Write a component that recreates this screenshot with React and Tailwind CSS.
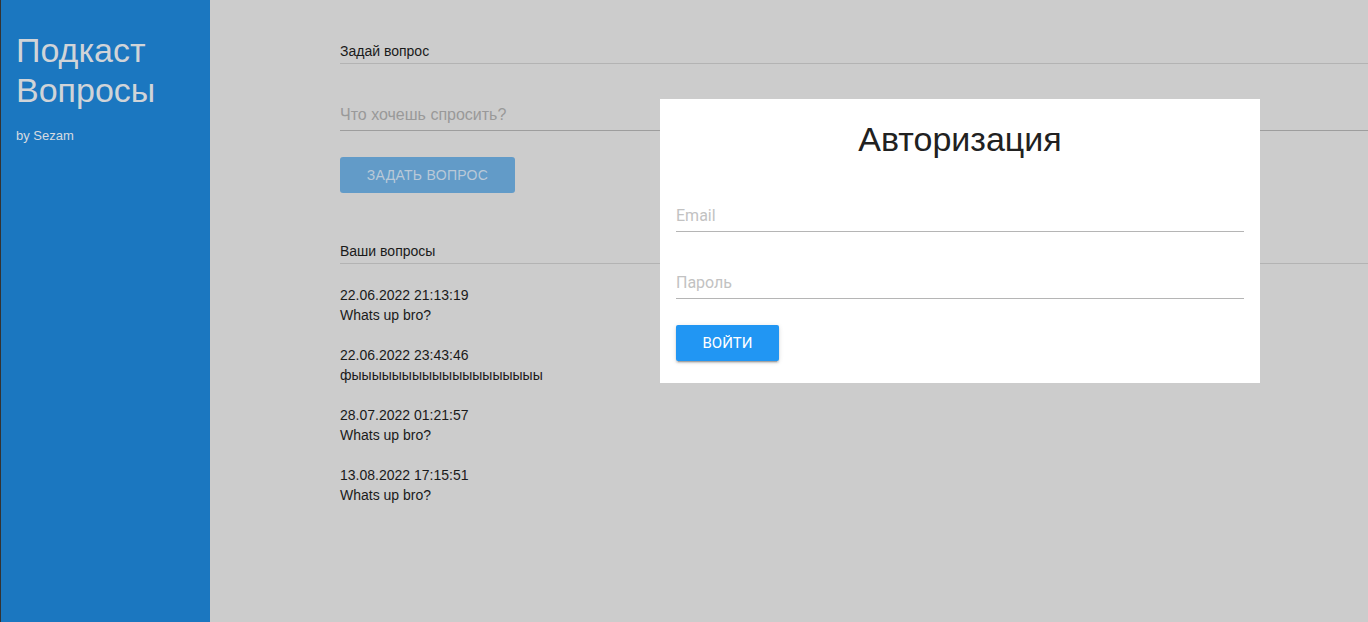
import React from 'react';

const questions = [
  { date: '22.06.2022 21:13:19', text: 'Whats up bro?' },
  { date: '22.06.2022 23:43:46', text: 'фыыыыыыыыыыыыыыыыыыы' },
  { date: '28.07.2022 01:21:57', text: 'Whats up bro?' },
  { date: '13.08.2022 17:15:51', text: 'Whats up bro?' },
];

const Sidebar = () => (
  <aside className="w-[210px] shrink-0 h-full bg-[#1b77c0] border-l border-[#333] pl-[15px] pt-[30px] font-['Liberation_Sans',Arial,sans-serif]">
    <h1 className="text-[34px] leading-10 text-[#d0d4d8] font-normal">
      Подкаст
      <br />
      Вопросы
    </h1>
    <p className="mt-4 text-[13px] leading-5 text-[#d6dbe0]">by Sezam</p>
  </aside>
);

const AskForm = () => (
  <div>
    <div className="text-[14px] leading-5 text-[#1a1a1a] pb-[2px] border-b border-[#b3b3b3]">
      Задай вопрос
    </div>
    <div className="mt-[39px] pb-[3px] border-b border-[#9d9d9d] text-[16px] leading-6 text-[#999]">
      Что хочешь спросить?
    </div>
    <button className="mt-[26px] w-[175px] h-9 rounded-[3px] bg-[#629bc8] text-[#b9c9d8] text-[14px] font-medium tracking-[0.3px] uppercase">
      Задать вопрос
    </button>
  </div>
);

const QuestionList = () => (
  <div className="mt-12">
    <div className="text-[14px] leading-5 text-[#1a1a1a] pb-[2px] border-b border-[#b3b3b3]">
      Ваши вопросы
    </div>
    <div className="mt-[21px] flex flex-col gap-5">
      {questions.map((q, i) => (
        <div key={i} className="text-[14px] leading-5 text-[#1a1a1a]">
          <div>{q.date}</div>
          <div>{q.text}</div>
        </div>
      ))}
    </div>
  </div>
);

const LoginDialog = () => (
  <div className="absolute left-[660px] top-[99px] w-[600px] bg-white px-4 pt-5 pb-[22px] font-['Roboto',sans-serif]">
    <h2 className="text-center text-[34px] leading-10 text-[#212121] font-normal font-['Liberation_Sans',Arial,sans-serif]">
      Авторизация
    </h2>
    <div className="mt-[45px] pb-[3px] border-b border-[#b5b5b5] text-[16px] leading-6 text-[#c2c2c2]">Email</div>
    <div className="mt-[39px] pb-[3px] border-b border-[#b5b5b5] text-[16px] leading-6 text-[#c2c2c2]">Пароль</div>
    <button className="mt-[26px] w-[103px] h-9 rounded-[2px] bg-[#2196f3] text-white text-[15px] font-normal uppercase shadow-[0_3px_1px_-2px_rgba(0,0,0,0.2),0_2px_2px_0_rgba(0,0,0,0.14),0_1px_5px_0_rgba(0,0,0,0.12)]">
      Войти
    </button>
  </div>
);

export default function App() {
  return (
    <div className="relative w-full h-[622px] flex bg-[#cccccc] overflow-hidden">
      <Sidebar />
      <main className="flex-1 pl-[130px] pt-[41px] font-['Liberation_Sans',Arial,sans-serif]">
        <AskForm />
        <QuestionList />
      </main>
      <LoginDialog />
    </div>
  );
}
